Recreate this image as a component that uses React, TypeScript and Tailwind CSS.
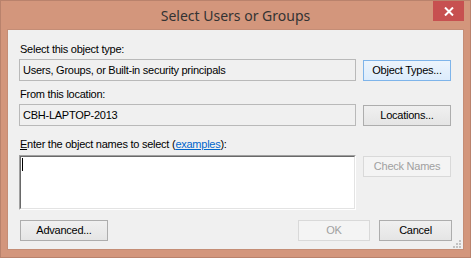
import React from 'react'

const ui = { fontFamily: '"Liberation Sans", Arial, sans-serif' }

const Btn: React.FC<{ w: string; kind?: 'normal' | 'focus' | 'disabled'; children: React.ReactNode }> = ({ w, kind = 'normal', children }) => {
  const look =
    kind === 'focus'
      ? 'border-[#7eb4ea] bg-gradient-to-b from-[#ecf4fc] to-[#dcecfc] text-black'
      : kind === 'disabled'
        ? 'border-[#d9d9d9] bg-[#f4f4f4] text-[#a0a0a0]'
        : 'border-[#adadad] bg-gradient-to-b from-[#f0f0f0] to-[#e5e5e5] text-black'
  return (
    <div className={`${w} h-[21px] border ${look} flex items-center justify-center text-[11px] leading-[13px] tracking-[-0.25px]`}>
      {children}
    </div>
  )
}

const ReadBox: React.FC<{ children: React.ReactNode }> = ({ children }) => (
  <div className="w-[337px] h-[22px] border border-[#b9b9b9] bg-[#f0f0f0] flex items-center pl-[3px] text-[11px] leading-[13px] tracking-[-0.25px] text-black">
    {children}
  </div>
)

export default function App() {
  return (
    <div className="relative w-[471px] h-[258px] bg-[#d3967c] border border-[#b9826c] px-[6px] flex flex-col" style={ui}>
      <div className="h-[28px] flex items-center justify-center text-[14px] text-[#333333]" style={{ fontFamily: '"Noto Sans", "Open Sans", sans-serif' }}>
        Select Users or Groups
      </div>
      <div className="absolute top-0 right-[6px] w-[31px] h-[20px] bg-[#c75050] flex items-center justify-center">
        <svg width="10" height="9" viewBox="0 0 10 9">
          <path d="M1 0.5 L9 8.5 M9 0.5 L1 8.5" stroke="#fff" strokeWidth="2" />
        </svg>
      </div>

      <div className="relative h-[221px] border border-[#c48d76] bg-[#f0f0f0] px-[11px] flex flex-col text-[11px] leading-[13px] tracking-[-0.25px] text-black">
        <div className="mt-[13px] ml-[1px] h-[13px]">Select this object type:</div>
        <div className="mt-[3px] flex items-start gap-[7px]">
          <ReadBox>Users, Groups, or Built-in security principals</ReadBox>
          <div className="mt-[1px]">
            <Btn w="w-[88px]" kind="focus">Object Types...</Btn>
          </div>
        </div>

        <div className="mt-[7px] ml-[1px] h-[13px]">From this location:</div>
        <div className="mt-[3px] flex items-start gap-[7px]">
          <ReadBox>CBH-LAPTOP-2013</ReadBox>
          <div className="mt-[1px]">
            <Btn w="w-[88px]">Locations...</Btn>
          </div>
        </div>

        <div className="mt-[12px] ml-[1px] h-[13px]">
          <span className="underline">E</span>nter the object names to select (
          <span className="text-[#0066cc] underline">examples</span>):
        </div>
        <div className="mt-[4px] flex items-start gap-[7px]">
          <div className="w-[337px] h-[55px] border-t border-l border-[#a0a0a0] border-b-white border-r-white border-b border-r">
            <div className="w-full h-full border-t border-l border-[#696969] border-b border-r border-b-[#e3e3e3] border-r-[#e3e3e3] bg-white pl-[1px] pt-[1px]">
              <div className="w-[1px] h-[13px] bg-black" />
            </div>
          </div>
          <div className="mt-[1px]">
            <Btn w="w-[88px]" kind="disabled">Check Names</Btn>
          </div>
        </div>

        <div className="mt-[10px] flex items-start">
          <div className="ml-[1px]">
            <Btn w="w-[88px]">Advanced...</Btn>
          </div>
          <div className="flex-1" />
          <Btn w="w-[72px]" kind="disabled">OK</Btn>
          <div className="ml-[9px]">
            <Btn w="w-[73px]">Cancel</Btn>
          </div>
        </div>

        <svg className="absolute bottom-[1px] right-[2px]" width="8" height="8" viewBox="0 0 8 8">
          <rect x="6" y="0" width="2" height="2" fill="#c2c2c2" />
          <rect x="3" y="3" width="2" height="2" fill="#c2c2c2" />
          <rect x="6" y="3" width="2" height="2" fill="#c2c2c2" />
          <rect x="0" y="6" width="2" height="2" fill="#c2c2c2" />
          <rect x="3" y="6" width="2" height="2" fill="#c2c2c2" />
          <rect x="6" y="6" width="2" height="2" fill="#c2c2c2" />
        </svg>
      </div>
    </div>
  )
}
